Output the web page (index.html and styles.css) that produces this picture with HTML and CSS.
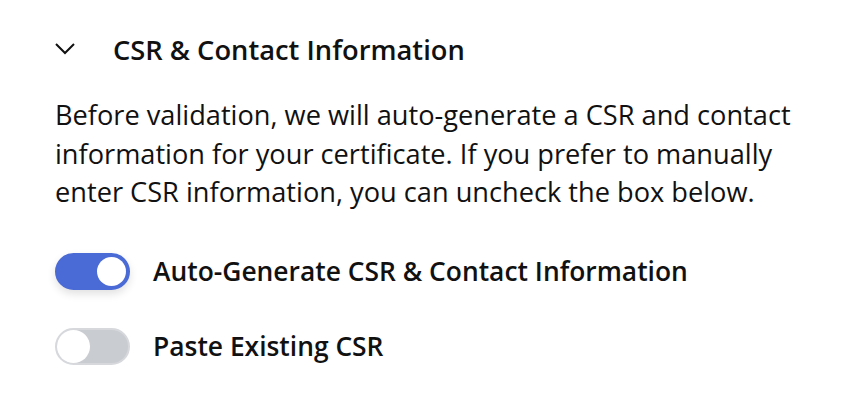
FILE: index.html
```html
<!DOCTYPE html>
<html>
<head>
    <title>CSR &amp; Contact Information</title>
    <link rel="stylesheet" href="styles.css">
</head>
<body>
    <div class="section">
        <div class="section-header">
            <svg class="chevron" width="20" height="12" viewBox="0 0 20 12">
                <path d="M1 1 L10 10 L19 1" fill="none" stroke="#111" stroke-width="2"/>
            </svg>
            <h2>CSR &amp; Contact Information</h2>
        </div>

        <p class="description">Before validation, we will auto-generate a CSR and contact information for your certificate. If you prefer to manually enter CSR information, you can uncheck the box below.</p>

        <div class="options">
            <label class="option">
                <span class="toggle on"><span class="knob"></span></span>
                <span class="option-label">Auto-Generate CSR &amp; Contact Information</span>
            </label>
            <label class="option">
                <span class="toggle"><span class="knob"></span></span>
                <span class="option-label">Paste Existing CSR</span>
            </label>
        </div>
    </div>
</body>
</html>
```

FILE: styles.css
```css
body {
    margin: 0;
    background: #fff;
    font-family: 'Open Sans', sans-serif;
    color: #111;
}
.section {
    padding: 26px 30px 0 55px;
}
.section-header {
    display: flex;
    align-items: center;
    gap: 38px;
    height: 46px;
}
.chevron { display: block; }
.section-header h2 {
    margin: 0;
    font-size: 27.3px;
    font-weight: 600;
}
.description {
    margin: 24px 0 0 0;
    font-size: 27.2px;
    line-height: 38.5px;
}
.options {
    margin-top: 41px;
    display: flex;
    flex-direction: column;
    gap: 38px;
}
.option {
    display: flex;
    align-items: center;
    gap: 23px;
}
.toggle {
    position: relative;
    width: 75px;
    height: 37px;
    border-radius: 19px;
    background: #c9ccd1;
    box-sizing: border-box;
    border: 2px solid #d6d8dc;
    flex-shrink: 0;
}
.toggle .knob {
    position: absolute;
    top: 0;
    left: 0;
    width: 33px;
    height: 33px;
    border-radius: 50%;
    background: #fff;
}
.toggle.on {
    background: #4a6ad6;
    border-color: #4a6ad6;
    box-shadow: 0 4px 8px rgba(0,0,0,0.12);
}
.toggle.on .knob {
    top: 2px;
    left: auto;
    right: 2px;
    width: 29px;
    height: 29px;
}
.option-label {
    font-size: 26.4px;
    font-weight: 600;
}
```
